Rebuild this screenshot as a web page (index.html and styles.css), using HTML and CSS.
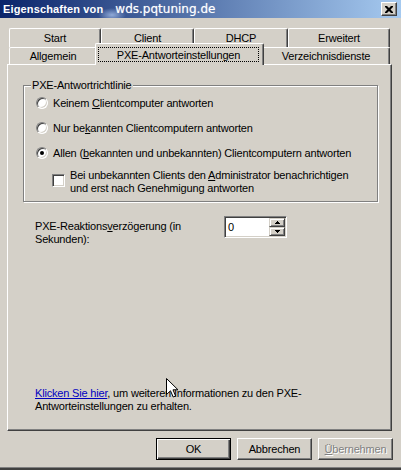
FILE: index.html
```html
<!DOCTYPE html>
<html lang="de">
<head>
<meta charset="utf-8">
<title>Eigenschaften von wds.pqtuning.de</title>
<link rel="stylesheet" href="styles.css">
</head>
<body>
<div class="window">
  <div class="titlebar">
    <span class="title-main">Eigenschaften von</span>
    <span class="title-host">wds.pqtuning.de</span>
    <span class="close-btn">
      <svg width="8" height="7" viewBox="0 0 8 7"><path d="M0 0h2l2 2 2-2h2v1L5.5 3.5 8 6v1H6L4 5 2 7H0V6l2.5-2.5L0 1z" fill="#000"/></svg>
    </span>
  </div>
  <div class="sheet">
    <div class="tabrow back">
      <div class="tab w-start">Start</div>
      <div class="tab w-client">Client</div>
      <div class="tab w-dhcp">DHCP</div>
      <div class="tab w-erw">Erweitert</div>
    </div>
    <div class="tabrow front">
      <div class="tab w-allg">Allgemein</div>
      <div class="tab selected"><span class="focus">PXE-Antworteinstellungen</span></div>
      <div class="tab w-verz">Verzeichnisdienste</div>
    </div>
    <div class="panel">
      <div class="group">
        <div class="group-title">PXE-Antwortrichtlinie</div>
        <div class="options">
          <div class="option"><span class="radio"></span><span>Keinem <u>C</u>lientcomputer antworten</span></div>
          <div class="option"><span class="radio"></span><span>Nur be<u>k</u>annten Clientcomputern antworten</span></div>
          <div class="option"><span class="radio checked"><span class="dot"></span></span><span>Allen (<u>b</u>ekannten und unbekannten) Clientcomputern antworten</span></div>
          <div class="option check-row"><span class="checkbox"></span><span>Bei unbekannten Clients den <u>A</u>dministrator benachrichtigen<br>und erst nach Genehmigung antworten</span></div>
        </div>
      </div>
      <div class="delay">
        <div class="delay-label">PXE-Reaktions<u>v</u>erzögerung (in Sekunden):</div>
        <div class="spin">
          <span class="spin-value">0</span>
          <span class="spin-buttons">
            <span class="spin-btn"><svg width="5" height="3" viewBox="0 0 5 3"><path d="M2 0h1v1h1v1h1v1H0V2h1V1h1z" fill="#000"/></svg></span>
            <span class="spin-btn"><svg width="5" height="3" viewBox="0 0 5 3"><path d="M0 0h5v1H4v1H3v1H2V2H1V1H0z" fill="#000"/></svg></span>
          </span>
        </div>
      </div>
      <div class="spacer"></div>
      <p class="info"><a href="#">Klicken Sie hier</a>, um weiteren Informationen zu den PXE-Antworteinstellungen zu erhalten.</p>
    </div>
    <div class="buttons">
      <span class="btn default">OK</span>
      <span class="btn">Abbrechen</span>
      <span class="btn disabled"><span><u>Ü</u>bernehmen</span></span>
    </div>
  </div>
  <svg class="cursor" width="13" height="20" viewBox="0 0 13 20"><path d="M0.5 0.5V16.5L4.5 12.8L7.2 19L9.6 18L7 11.8H12Z" fill="#fff" stroke="#000" stroke-width="1" stroke-linejoin="miter"/></svg>
</div>
</body>
</html>
```
FILE: styles.css
```css
html, body {
  margin: 0;
  padding: 0;
  background: #d4d0c8;
}

.window {
  position: relative;
  width: 401px;
  height: 470px;
  box-sizing: border-box;
  overflow: hidden;
  background: #d4d0c8;
  font-family: "Liberation Sans", Arial, sans-serif;
  font-size: 11px;
  letter-spacing: -0.18px;
  color: #000;
  box-shadow: inset 0 -2px #404040, inset 0 -3px #808080;
}

.titlebar {
  height: 18px;
  display: flex;
  align-items: center;
  padding-left: 3px;
  color: #fff;
  letter-spacing: 0;
  background:
    radial-gradient(ellipse 14px 7px at 112px 15px, rgba(175, 200, 240, 0.75), rgba(175, 200, 240, 0) 100%),
    linear-gradient(to right, #0a246a, #a6caf0);
}

.title-main {
  font-weight: bold;
  font-size: 11px;
  line-height: 18px;
  letter-spacing: 0.15px;
}

.title-host {
  margin-left: 12px;
  font-family: "DejaVu Sans", sans-serif;
  font-size: 12px;
  line-height: 18px;
  text-shadow: 0 0 1px rgba(255, 255, 255, 0.6);
}

.close-btn {
  margin-left: auto;
  margin-right: 4px;
  width: 16px;
  height: 14px;
  box-sizing: border-box;
  background: #d4d0c8;
  border: 1px solid;
  border-color: #fff #404040 #404040 #fff;
  box-shadow: inset -1px -1px #808080;
  display: flex;
  align-items: center;
  justify-content: center;
  padding-right: 1px;
}

.close-btn svg {
  display: block;
}

.sheet {
  margin: 10px 0 0 7px;
  width: 386px;
}

.tabrow {
  display: flex;
  padding-left: 2px;
}

.tabrow.back {
  height: 19px;
}

.tabrow.front {
  height: 17px;
}

.tab {
  box-sizing: border-box;
  height: 100%;
  border-top: 1px solid #fff;
  border-left: 1px solid #fff;
  border-right: 1px solid #404040;
  border-radius: 2px 2px 0 0;
  box-shadow: inset -1px 0 #808080;
  background: #d4d0c8;
  display: flex;
  align-items: center;
  justify-content: center;
  white-space: nowrap;
}

.w-start { width: 92px; }
.w-client { width: 93px; }
.w-dhcp { width: 94px; }
.w-erw { width: 102px; }
.w-allg { width: 88px; }
.w-verz { width: 128px; }

.tab.selected {
  position: relative;
  z-index: 1;
  width: 169px;
  height: 22px;
  margin: -4px -2px 0;
  padding: 3px 4px 3px 2px;
  align-items: stretch;
}

.focus {
  flex: 1;
  border: 1px dotted #000;
  display: flex;
  align-items: center;
  justify-content: center;
}

.panel {
  box-sizing: border-box;
  width: 385px;
  height: 367px;
  border-top: 1px solid #fff;
  border-left: 1px solid #fff;
  border-right: 1px solid #404040;
  border-bottom: 1px solid #404040;
  box-shadow: inset -1px -1px #808080;
  display: flex;
  flex-direction: column;
}

.group {
  box-sizing: border-box;
  margin: 20px 0 0 15px;
  width: 355px;
  height: 117px;
  border: 1px solid #808080;
  box-shadow: inset 1px 1px #fff, 1px 1px #fff;
}

.group-title {
  width: max-content;
  margin: -7px 0 0 7px;
  padding: 0 1px;
  background: #d4d0c8;
  line-height: 13px;
}

.options {
  display: flex;
  flex-direction: column;
  gap: 11px;
  padding: 4px 0 0 12px;
}

.option {
  display: flex;
  align-items: center;
  gap: 5px;
  height: 14px;
  line-height: 13px;
  white-space: nowrap;
}

.radio {
  box-sizing: border-box;
  width: 12px;
  height: 12px;
  flex: none;
  border-radius: 50%;
  background: #fff;
  border: 1px solid;
  border-color: #808080 #fff #fff #808080;
  box-shadow: inset 1px 1px #404040, inset -1px -1px #d4d0c8;
  display: flex;
  align-items: center;
  justify-content: center;
}

.dot {
  width: 4px;
  height: 4px;
  border-radius: 50%;
  background: #000;
}

.check-row {
  height: auto;
  align-items: flex-start;
  margin-top: -2px;
  padding-left: 16px;
}

.checkbox {
  box-sizing: border-box;
  width: 13px;
  height: 13px;
  flex: none;
  margin-top: 5px;
  background: #fff;
  border: 1px solid;
  border-color: #808080 #fff #fff #808080;
  box-shadow: inset 1px 1px #404040, inset -1px -1px #d4d0c8;
}

.delay {
  display: flex;
  gap: 14px;
  margin: 14px 0 0 27px;
}

.delay-label {
  width: 175px;
  padding-top: 4px;
  line-height: 13px;
}

.spin {
  box-sizing: border-box;
  width: 63px;
  height: 22px;
  padding: 1px;
  background: #fff;
  border: 1px solid;
  border-color: #808080 #fff #fff #808080;
  box-shadow: inset 1px 1px #404040, inset -1px -1px #d4d0c8;
  display: flex;
}

.spin-value {
  flex: 1;
  padding-left: 2px;
  line-height: 18px;
}

.spin-buttons {
  width: 16px;
  display: flex;
  flex-direction: column;
}

.spin-btn {
  box-sizing: border-box;
  height: 9px;
  background: #d4d0c8;
  border: 1px solid;
  border-color: #d4d0c8 #404040 #404040 #d4d0c8;
  box-shadow: inset 1px 1px #fff, inset -1px -1px #808080;
  display: flex;
  align-items: center;
  justify-content: center;
}

.spin-btn svg {
  display: block;
}

.spacer {
  flex: 1;
}

.info {
  margin: 0 0 17px 27px;
  width: 300px;
  line-height: 13px;
}

.info a {
  color: #0000c0;
  text-decoration: underline;
}

.buttons {
  display: flex;
  justify-content: flex-end;
  gap: 6px;
  margin-top: 7px;
}

.btn {
  box-sizing: border-box;
  width: 75px;
  height: 22px;
  border: 1px solid;
  border-color: #fff #404040 #404040 #fff;
  box-shadow: inset -1px -1px #808080;
  display: flex;
  align-items: center;
  justify-content: center;
}

.btn.default {
  border: 1px solid #000;
  box-shadow: inset 1px 1px #fff, inset -1px -1px #404040, inset -2px -2px #808080;
}

.btn.disabled {
  color: #808080;
  text-shadow: 1px 1px #fff;
}

.cursor {
  position: absolute;
  left: 166px;
  top: 378px;
  display: block;
}
```
